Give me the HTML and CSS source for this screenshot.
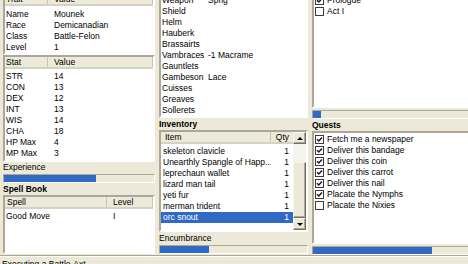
FILE: index.html
```html
<!DOCTYPE html>
<html>
<head>
    <meta charset="UTF-8">
    <link rel="stylesheet" href="styles.css">
</head>
<body>
    <div class="window">
        <!-- Character sheet -->
        <div class="column">
            <div class="listview traits">
                <div class="lv-header">
                    <span class="hcell col-key">Trait</span>
                    <span class="hcell col-fill">Value</span>
                </div>
                <div class="lv-body">
                    <div class="lv-row"><span class="cell col-key">Name</span><span class="cell val">Mounek</span></div>
                    <div class="lv-row"><span class="cell col-key">Race</span><span class="cell val">Demicanadian</span></div>
                    <div class="lv-row"><span class="cell col-key">Class</span><span class="cell val">Battle-Felon</span></div>
                    <div class="lv-row"><span class="cell col-key">Level</span><span class="cell val">1</span></div>
                </div>
            </div>

            <div class="listview stats">
                <div class="lv-header">
                    <span class="hcell col-key">Stat</span>
                    <span class="hcell col-fill">Value</span>
                </div>
                <div class="lv-body">
                    <div class="lv-row"><span class="cell col-key">STR</span><span class="cell val">14</span></div>
                    <div class="lv-row"><span class="cell col-key">CON</span><span class="cell val">13</span></div>
                    <div class="lv-row"><span class="cell col-key">DEX</span><span class="cell val">12</span></div>
                    <div class="lv-row"><span class="cell col-key">INT</span><span class="cell val">13</span></div>
                    <div class="lv-row"><span class="cell col-key">WIS</span><span class="cell val">14</span></div>
                    <div class="lv-row"><span class="cell col-key">CHA</span><span class="cell val">18</span></div>
                    <div class="lv-row"><span class="cell col-key">HP Max</span><span class="cell val">4</span></div>
                    <div class="lv-row"><span class="cell col-key">MP Max</span><span class="cell val">3</span></div>
                </div>
            </div>

            <div class="caption">Experience</div>
            <div class="progress"><div class="fill" style="width: 61%;"></div></div>

            <div class="title">Spell Book</div>
            <div class="listview spells">
                <div class="lv-header">
                    <span class="hcell col-spell">Spell</span>
                    <span class="hcell col-fill">Level</span>
                </div>
                <div class="lv-body">
                    <div class="lv-row"><span class="cell col-spell">Good Move</span><span class="cell val">I</span></div>
                </div>
            </div>
        </div>

        <!-- Equipment / inventory -->
        <div class="column">
            <div class="listview equipment">
                <div class="lv-header">
                    <span class="hcell col-slot">Position</span>
                    <span class="hcell col-fill">Equipped</span>
                </div>
                <div class="lv-body">
                    <div class="lv-row"><span class="cell col-slot">Weapon</span><span class="cell val">Sprig</span></div>
                    <div class="lv-row"><span class="cell col-slot">Shield</span><span class="cell val"></span></div>
                    <div class="lv-row"><span class="cell col-slot">Helm</span><span class="cell val"></span></div>
                    <div class="lv-row"><span class="cell col-slot">Hauberk</span><span class="cell val"></span></div>
                    <div class="lv-row"><span class="cell col-slot">Brassairts</span><span class="cell val"></span></div>
                    <div class="lv-row"><span class="cell col-slot">Vambraces</span><span class="cell val">-1 Macrame</span></div>
                    <div class="lv-row"><span class="cell col-slot">Gauntlets</span><span class="cell val"></span></div>
                    <div class="lv-row"><span class="cell col-slot">Gambeson</span><span class="cell val">Lace</span></div>
                    <div class="lv-row"><span class="cell col-slot">Cuisses</span><span class="cell val"></span></div>
                    <div class="lv-row"><span class="cell col-slot">Greaves</span><span class="cell val"></span></div>
                    <div class="lv-row"><span class="cell col-slot">Sollerets</span><span class="cell val"></span></div>
                </div>
            </div>

            <div class="title">Inventory</div>
            <div class="listview inventory">
                <div class="lv-main">
                    <div class="lv-header">
                        <span class="hcell col-item">Item</span>
                        <span class="hcell col-qty">Qty</span>
                    </div>
                    <div class="lv-body">
                        <div class="lv-row"><span class="cell col-item">skeleton clavicle</span><span class="cell col-qty">1</span></div>
                        <div class="lv-row"><span class="cell col-item">Unearthly Spangle of Happ...</span><span class="cell col-qty">1</span></div>
                        <div class="lv-row"><span class="cell col-item">leprechaun wallet</span><span class="cell col-qty">1</span></div>
                        <div class="lv-row"><span class="cell col-item">lizard man tail</span><span class="cell col-qty">1</span></div>
                        <div class="lv-row"><span class="cell col-item">yeti fur</span><span class="cell col-qty">1</span></div>
                        <div class="lv-row"><span class="cell col-item">merman trident</span><span class="cell col-qty">1</span></div>
                        <div class="lv-row selected"><span class="cell col-item">orc snout</span><span class="cell col-qty">1</span></div>
                    </div>
                </div>
                <div class="scrollbar">
                    <div class="sb-btn"><span class="arrow-up"></span></div>
                    <div class="sb-track"></div>
                    <div class="sb-thumb"></div>
                    <div class="sb-btn"><span class="arrow-down"></span></div>
                </div>
            </div>

            <div class="caption encumbrance">Encumbrance</div>
            <div class="progress"><div class="fill" style="width: 33%;"></div></div>
        </div>

        <!-- Plot / quests -->
        <div class="column">
            <div class="listview plot">
                <div class="lv-body">
                    <div class="check-row"><span class="check on"><svg viewBox="0 0 7 7"><polyline points="1,3.2 2.8,5 6,1.6"/></svg></span>Prologue</div>
                    <div class="check-row"><span class="check"></span>Act I</div>
                </div>
            </div>
            <div class="progress plot-bar"><div class="fill" style="width: 5%;"></div></div>

            <div class="title">Quests</div>
            <div class="listview quests">
                <div class="lv-body">
                    <div class="check-row"><span class="check on"><svg viewBox="0 0 7 7"><polyline points="1,3.2 2.8,5 6,1.6"/></svg></span>Fetch me a newspaper</div>
                    <div class="check-row"><span class="check on"><svg viewBox="0 0 7 7"><polyline points="1,3.2 2.8,5 6,1.6"/></svg></span>Deliver this bandage</div>
                    <div class="check-row"><span class="check on"><svg viewBox="0 0 7 7"><polyline points="1,3.2 2.8,5 6,1.6"/></svg></span>Deliver this coin</div>
                    <div class="check-row"><span class="check on"><svg viewBox="0 0 7 7"><polyline points="1,3.2 2.8,5 6,1.6"/></svg></span>Deliver this carrot</div>
                    <div class="check-row"><span class="check on"><svg viewBox="0 0 7 7"><polyline points="1,3.2 2.8,5 6,1.6"/></svg></span>Deliver this nail</div>
                    <div class="check-row"><span class="check on"><svg viewBox="0 0 7 7"><polyline points="1,3.2 2.8,5 6,1.6"/></svg></span>Placate the Nymphs</div>
                    <div class="check-row"><span class="check"></span>Placate the Nixies</div>
                </div>
            </div>
            <div class="progress quest-bar"><div class="fill" style="width: 75%;"></div></div>
        </div>
    </div>

    <div class="statusbar">Executing a Battle-Axt</div>
</body>
</html>
```

FILE: styles.css
```css
* {
    box-sizing: border-box;
}

html, body {
    margin: 0;
    overflow: hidden;
}

body {
    width: 468px;
    height: 264px;
    background: #ece9d8;
    color: #000;
    font-family: "Liberation Sans", Arial, sans-serif;
    font-size: 8.5px;
}

.window {
    display: grid;
    grid-template-columns: 152px 149px 160px;
    column-gap: 4px;
    padding-left: 3px;
    height: 255px;
}

.column {
    display: flex;
    flex-direction: column;
    min-width: 0;
}

/* List views */
.listview {
    background: #fff;
    border: 2px solid;
    border-color: #aca899 #fff #fff #aca899;
    overflow: hidden;
    display: flex;
    flex-direction: column;
    flex: none;
}

.lv-header {
    display: flex;
    height: 12px;
    flex: none;
    background: #ebeadb;
    border-bottom: 2px solid #d6d2c2;
    line-height: 10px;
    white-space: nowrap;
}

.hcell {
    padding-left: 6px;
    border-right: 1px solid #c7c5b2;
    overflow: hidden;
}

.hcell:first-child {
    padding-left: 1px;
}

.lv-row {
    display: flex;
    height: 11px;
    line-height: 11px;
    white-space: nowrap;
}

.cell {
    padding-left: 1px;
    overflow: hidden;
}

.cell.val {
    flex: 1;
    padding-left: 6px;
}

.col-key { width: 43px; flex: none; }
.col-spell { width: 102px; flex: none; }
.col-slot { width: 42px; flex: none; }
.col-fill { flex: 1; }

.cell.col-slot { overflow: visible; }

.cell.col-spell { padding-left: 1px; }
.hcell.col-spell { padding-left: 2px; }

.traits {
    margin-top: -8px;
    height: 63px;
}

.traits .lv-body { padding-top: 3px; }

.stats { height: 107px; }
.stats .lv-body { padding-top: 2px; }

.spells { height: 59px; }
.spells .lv-body { padding-top: 2px; }

.equipment {
    margin-top: -20px;
    height: 138px;
}

.equipment .lv-body { padding-top: 1px; }
.equipment .cell.val { padding-left: 5px; }

/* Inventory with its scrollbar */
.inventory {
    height: 102px;
    flex-direction: row;
}

.lv-main {
    flex: 1;
    min-width: 0;
    display: flex;
    flex-direction: column;
}

.inventory .lv-body { padding-top: 2px; }

.col-item {
    flex: 1;
    min-width: 0;
}

.hcell.col-item { padding-left: 4px; }
.cell.col-item { padding-left: 2px; }

.col-qty {
    width: 22px;
    flex: none;
    text-align: right;
    padding-right: 4px;
}

.hcell.col-qty {
    padding-left: 0;
    border-right: none;
}

.lv-row.selected {
    background: #316ac5;
    color: #fff;
}

.scrollbar {
    width: 13px;
    flex: none;
    display: flex;
    flex-direction: column;
}

.sb-btn,
.sb-thumb {
    background: #ece9d8;
    border: 1px solid;
    border-color: #f6f5ef #716f64 #716f64 #f6f5ef;
    box-shadow: inset -1px -1px #aca899;
}

.sb-btn {
    height: 12px;
    display: flex;
    align-items: center;
    justify-content: center;
    flex: none;
}

.sb-track {
    height: 18px;
    background: #f4f3ee;
}

.sb-thumb {
    flex: 1;
}

.arrow-up,
.arrow-down {
    width: 0;
    height: 0;
    border-left: 3px solid transparent;
    border-right: 3px solid transparent;
}

.arrow-up { border-bottom: 3px solid #000; }
.arrow-down { border-top: 3px solid #000; }

/* Check lists */
.plot {
    margin-top: -8px;
    height: 116px;
}

.quests { height: 113px; }

.plot .lv-body,
.quests .lv-body {
    padding-top: 1px;
}

.check-row {
    display: flex;
    align-items: center;
    height: 11px;
    line-height: 11px;
    white-space: nowrap;
    padding-left: 1px;
}

.check {
    width: 9px;
    height: 9px;
    flex: none;
    margin-right: 3px;
    background: #fff;
    border: 1px solid #3b3b3b;
    display: flex;
}

.check svg {
    width: 7px;
    height: 7px;
}

.check polyline {
    fill: none;
    stroke: #1a1a1a;
    stroke-width: 1.5;
}

/* Labels and bars */
.title {
    height: 12px;
    line-height: 12px;
    font-weight: bold;
    flex: none;
}

.caption {
    height: 11px;
    line-height: 11px;
    flex: none;
}

.caption.encumbrance { margin-top: 1px; }

.progress {
    height: 9px;
    margin-top: 1px;
    flex: none;
    border: 1px solid;
    border-color: #aca899 #fff #fff #aca899;
}

.progress .fill {
    height: 100%;
    background: #316ac5;
}

.plot-bar,
.quest-bar {
    margin-top: 2px;
}

.statusbar {
    height: 9px;
    border-top: 1px solid #aca899;
    box-shadow: inset 0 1px #fff;
    padding: 3px 2px 0;
    line-height: 11px;
    white-space: nowrap;
}
```
